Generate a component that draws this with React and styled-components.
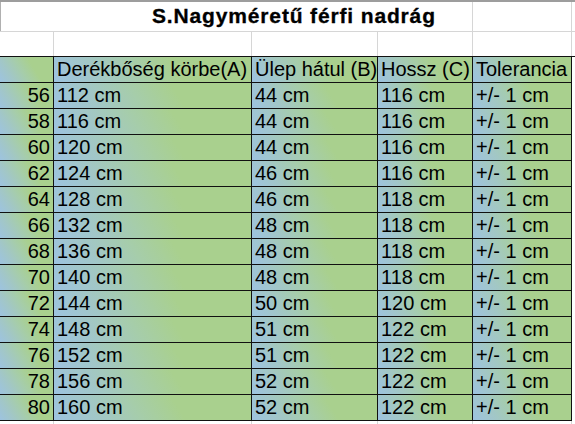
import React from 'react';
import styled, { createGlobalStyle } from 'styled-components';

const GlobalStyle = createGlobalStyle`
  html, body { margin: 0; padding: 0; background: #fff; }
  body { font-family: "Liberation Sans", Arial, sans-serif; color: #000; }
`;

const COLS = '54px 198px 126px 95px 99px 1fr';
const GRID_LIGHT = '#d6d6d6';
const LINE = '#111';

const Sheet = styled.div`
  width: 575px;
  height: 424px;
  overflow: hidden;
  background: #fff;
`;

const TitleRow = styled.div`
  display: grid;
  grid-template-columns: 473px 99px 1fr;
  height: 29px;
  border-top: 2px solid #9d9d9d;
  border-bottom: 1px solid ${GRID_LIGHT};
  box-shadow: inset 1px 0 0 #b0b0b0;
`;

const TitleCell = styled.div`
  border-right: 1px solid ${GRID_LIGHT};
  padding-left: 152px;
  font-weight: bold;
  font-size: 21px;
  letter-spacing: 0.85px;
  line-height: 28px;
  white-space: nowrap;
  -webkit-text-stroke: 0.3px #000;
`;

const BlankRow = styled.div`
  display: grid;
  grid-template-columns: ${COLS};
  height: ${(p) => p.$h}px;
`;

const BlankCell = styled.div`
  border-right: ${(p) => (p.$last ? 'none' : `1px solid ${GRID_LIGHT}`)};
`;

const Table = styled.div`
  border-top: 1px solid ${LINE};
`;

const Row = styled.div`
  display: grid;
  grid-template-columns: ${COLS};
  height: 26px;
`;

const Cell = styled.div`
  box-sizing: border-box;
  height: 26px;
  border-right: 1px solid ${LINE};
  border-bottom: 1px solid ${LINE};
  padding: 0 3px;
  font-size: 20px;
  line-height: 24px;
  white-space: nowrap;
  text-align: ${(p) => (p.$right ? 'right' : 'left')};
  background: linear-gradient(58deg, #9dc3e0 0%, #a2c7c6 22%, #a6cdaa 42%, #a9d08e 62%, #a9d08e 100%);
`;

const Spacer = styled.div`
  background: #fff;
`;

const rows = [
  [56, 112, 44, 116],
  [58, 116, 44, 116],
  [60, 120, 44, 116],
  [62, 124, 46, 116],
  [64, 128, 46, 118],
  [66, 132, 48, 118],
  [68, 136, 48, 118],
  [70, 140, 48, 118],
  [72, 144, 50, 120],
  [74, 148, 51, 122],
  [76, 152, 51, 122],
  [78, 156, 52, 122],
  [80, 160, 52, 122],
];

function Blank({ h }) {
  return (
    <BlankRow $h={h}>
      <BlankCell />
      <BlankCell />
      <BlankCell />
      <BlankCell />
      <BlankCell />
      <BlankCell $last />
    </BlankRow>
  );
}

export default function App() {
  return (
    <>
      <GlobalStyle />
      <Sheet>
        <TitleRow>
          <TitleCell>S.Nagyméretű férfi nadrág</TitleCell>
          <BlankCell />
          <BlankCell $last />
        </TitleRow>
        <Blank h={24} />
        <Table>
          <Row>
            <Cell />
            <Cell>Derékbőség körbe(A)</Cell>
            <Cell>Ülep hátul (B)</Cell>
            <Cell>Hossz (C)</Cell>
            <Cell>Tolerancia</Cell>
            <Spacer />
          </Row>
          {rows.map(([size, waist, seat, length]) => (
            <Row key={size}>
              <Cell $right>{size}</Cell>
              <Cell>{waist} cm</Cell>
              <Cell>{seat} cm</Cell>
              <Cell>{length} cm</Cell>
              <Cell>+/- 1 cm</Cell>
              <Spacer />
            </Row>
          ))}
        </Table>
        <Blank h={6} />
      </Sheet>
    </>
  );
}
